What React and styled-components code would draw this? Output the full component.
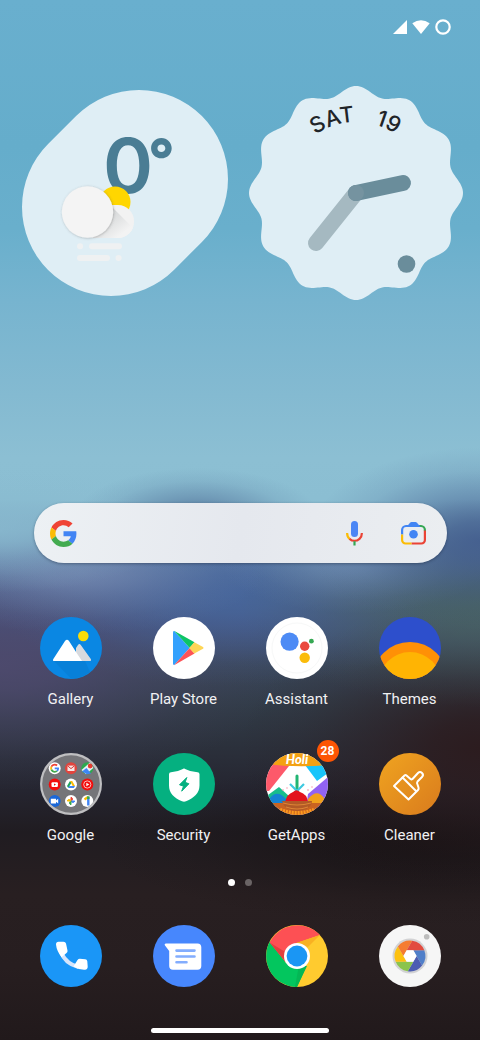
import React from 'react'
import styled, { createGlobalStyle } from 'styled-components'

const GlobalStyle = createGlobalStyle`
    * {
        box-sizing: border-box;
    }
    body {
        margin: 0;
        font-family: Roboto, sans-serif;
        background: #231b1d;
    }
    button {
        font: inherit;
        border: 0;
        padding: 0;
        background: none;
        cursor: pointer;
    }
    svg {
        display: block;
        overflow: visible;
    }
`

// soft spot of wallpaper colour that eases out towards its rim
const glow = (size, at, rgb, alpha) => `radial-gradient(
    ellipse ${size} at ${at},
    rgba(${rgb}, ${alpha}),
    rgba(${rgb}, ${alpha * 0.85}) 20%,
    rgba(${rgb}, ${alpha * 0.5}) 45%,
    rgba(${rgb}, ${alpha * 0.15}) 75%,
    rgba(${rgb}, 0)
)`

const Home = styled.main`
    min-height: 100vh;
    display: flex;
    flex-direction: column;
    padding-bottom: 7px;
    background:
        ${glow('26% 5%', '41% 50%', '74, 104, 146', 0.8)},
        ${glow('36% 9%', '100% 52%', '66, 92, 142', 0.9)},
        ${glow('36% 6%', '0% 51%', '136, 184, 206', 0.8)},
        ${glow('38% 6%', '17% 55%', '118, 138, 178', 0.75)},
        ${glow('28% 5%', '74% 54%', '112, 142, 180', 0.8)},
        ${glow('50% 10%', '100% 58%', '72, 98, 94', 0.95)},
        ${glow('50% 9%', '48% 57%', '70, 102, 156', 0.9)},
        ${glow('60% 12%', '0% 64%', '80, 74, 112', 0.85)},
        ${glow('50% 14%', '100% 72%', '44, 28, 31', 1)},
        ${glow('70% 8%', '90% 81%', '22, 17, 19', 0.8)},
        linear-gradient(
            #69afce 0%,
            #65adcb 14%,
            #69afcc 22%,
            #77b4cf 29%,
            #84bad1 38%,
            #8cbfd3 44%,
            #8bbed2 48%,
            #7fadc6 51%,
            #6283a9 54%,
            #4d618c 57%,
            #44527a 60%,
            #3a4659 64%,
            #313b47 68%,
            #2b303b 72%,
            #252530 76%,
            #201c21 80%,
            #281f21 86%,
            #271e20 93%,
            #21191b 100%
        );
`

const StatusBar = styled.header`
    height: 54px;
    display: flex;
    align-items: center;
    justify-content: flex-end;
    gap: 5px;
    padding-right: 29px;
`

const Widgets = styled.section`
    display: flex;
    align-items: center;
    justify-content: space-between;
    padding: 32px 17px 0 22px;
`

const SearchBar = styled.form`
    height: 60px;
    margin: auto 33px 0 34px;
    padding: 0 21px 0 16px;
    display: flex;
    align-items: center;
    border-radius: 30px;
    background: linear-gradient(100deg, #edf1f4, #e5e8ee 50%, #ebeef1);
    box-shadow: 0 1px 3px rgba(20, 30, 50, 0.4);
`

const SearchInput = styled.input`
    flex: 1;
    min-width: 0;
    height: 40px;
    margin: 0 16px;
    border: 0;
    outline: 0;
    background: transparent;
    font: 16px Roboto, sans-serif;
    color: #202124;
`

const SearchActions = styled.div`
    display: flex;
    align-items: center;
    gap: 38px;
`

const AppGrid = styled.nav`
    display: grid;
    grid-template-columns: repeat(4, 1fr);
    row-gap: 44px;
    padding: 0 14px;
    margin-top: ${props => props.$top}px;
`

const AppButton = styled.button`
    display: flex;
    flex-direction: column;
    align-items: center;
    gap: 10px;
    color: #f1f1f3;
    font-size: 15px;
    line-height: 20px;
`

const IconBox = styled.span`
    position: relative;
    width: 62px;
    height: 62px;
`

const Badge = styled.span`
    position: absolute;
    top: -13px;
    right: -11px;
    width: 22px;
    height: 22px;
    border-radius: 50%;
    background: #fd5504;
    color: #fff;
    font-size: 12px;
    font-weight: 700;
    line-height: 22px;
    text-align: center;
`

const Pager = styled.div`
    display: flex;
    justify-content: center;
    gap: 10px;
    margin-top: 34px;
`

const PageDot = styled.span`
    width: 7px;
    height: 7px;
    border-radius: 50%;
    background: ${props => (props.$active ? '#fff' : '#6a6465')};
`

const HomeBar = styled.div`
    width: 37%;
    height: 5px;
    margin: 41px auto 0;
    border-radius: 3px;
    background: #fff;
`

const polar = (r, deg) => {
    const a = (deg * Math.PI) / 180
    return [r * Math.cos(a), r * Math.sin(a)]
}

// twelve lobes around the clock face
const scallop = Array.from({ length: 360 }, (_, deg) => {
    const r = 102.5 + 4.5 * Math.cos((12 * deg * Math.PI) / 180)
    return polar(r, deg).map(n => (n + 107).toFixed(2)).join(' ')
}).join('L')

const WeatherWidget = () => (
    <svg width="206" height="206" viewBox="0 0 206 206" role="img" aria-label="Weather">
        <defs>
            <filter id="cloudShadow" x="-30%" y="-30%" width="160%" height="160%">
                <feDropShadow dx="0.5" dy="0.5" stdDeviation="1" floodColor="#555" floodOpacity="0.4" />
            </filter>
            <linearGradient id="cloud" x1="0" y1="0" x2="1" y2="1">
                <stop offset="0.3" stopColor="#d6d8d9" />
                <stop offset="0.75" stopColor="#f3f3f3" />
            </linearGradient>
            <clipPath id="cloudClip">
                <rect x="58" y="115" width="54" height="33" rx="16" />
            </clipPath>
        </defs>
        <path d="M117 89L89 117" stroke="#dfeef5" strokeWidth="178" strokeLinecap="round" />
        <g fontFamily="Inter, sans-serif" fill="#4a7d94">
            <text x="81" y="103" fontSize="76" fontWeight="600">0</text>
            <text x="126" y="90" fontSize="58" fontWeight="800">°</text>
        </g>
        <circle cx="93" cy="112" r="15.5" fill="#ffd600" />
        <rect x="58" y="115" width="54" height="33" rx="16" fill="#f2f2f2" />
        <path d="M91 118L113 140V150H70z" fill="url(#cloud)" clipPath="url(#cloudClip)" />
        <circle cx="65.500" cy="122" r="25.700" fill="#f4f4f4" filter="url(#cloudShadow)" />
        <path d="M58 156.300h.1M70 156.300h27M58 167.900h27M96.500 167.900h.1" stroke="#eff1f2" strokeWidth="6" strokeLinecap="round" />
    </svg>
)

const ClockWidget = () => (
    <svg width="214" height="214" viewBox="0 0 214 214" role="img" aria-label="Clock">
        <defs>
            <path id="dateArc" d="M36 107A71 71 0 0 1 178 107" />
        </defs>
        <path d={`M${scallop}Z`} fill="#dfeef5" />
        <g fontFamily="Inter, sans-serif" fontSize="22" fontWeight="500" fill="#1f2529">
            <text textAnchor="middle">
                <textPath href="#dateArc" startOffset="89">SAT</textPath>
            </text>
            <text textAnchor="middle">
                <textPath href="#dateArc" startOffset="142">19</textPath>
            </text>
        </g>
        <g strokeWidth="16" strokeLinecap="round">
            <path d="M107 107L67 157" stroke="#a5b9c1" />
            <path d="M107 107L154 97" stroke="#6a8d9b" />
        </g>
        <circle cx="107" cy="107" r="8" fill="#7593a0" />
        <circle cx="157.500" cy="178" r="8.800" fill="#6a8d9b" />
    </svg>
)

const GoogleLogo = ({ size, x, y }) => (
    <svg width={size} height={size} x={x} y={y} viewBox="0 0 48 48" aria-hidden="true">
        <path fill="#ef4335" d="M24 9.500c3.540 0 6.710 1.220 9.210 3.600l6.850-6.850C35.900 2.380 30.470 0 24 0 14.620 0 6.510 5.380 2.560 13.220l7.980 6.190C12.430 13.720 17.740 9.500 24 9.500z" />
        <path fill="#4285f4" d="M46.980 24.550c0-1.570-.15-3.090-.38-4.550H24v9.020h12.940c-.58 2.960-2.260 5.480-4.780 7.180l7.730 6c4.510-4.180 7.090-10.360 7.090-17.650z" />
        <path fill="#fbbc05" d="M10.530 28.590c-.48-1.450-.76-2.990-.76-4.590s.27-3.140.76-4.590l-7.980-6.190C.92 16.460 0 20.120 0 24c0 3.880.92 7.540 2.560 10.780l7.970-6.190z" />
        <path fill="#43ab50" d="M24 48c6.480 0 11.930-2.130 15.890-5.810l-7.730-6c-2.150 1.450-4.920 2.300-8.160 2.300-6.260 0-11.570-4.220-13.470-9.910l-7.980 6.190C6.510 42.620 14.620 48 24 48z" />
    </svg>
)

const MicIcon = () => (
    <svg width="17" height="25" viewBox="0 0 17 25" aria-hidden="true">
        <rect x="5" y="0" width="7" height="16" rx="3.500" fill="#4a86f5" />
        <g fill="none" strokeWidth="2.200">
            <path d="M1.100 12c0 2.600 1 4.700 2.600 6" stroke="#fbbc05" />
            <path d="M3.500 17.800c3 2.600 7 2.600 10 0 1.500-1.300 2.400-3.300 2.400-5.800" stroke="#ea4335" />
            <path d="M8.500 20.200V24.500" stroke="#34a853" />
        </g>
    </svg>
)

const LensIcon = () => (
    <svg width="25" height="23" viewBox="0 0 25 23" aria-hidden="true">
        <g fill="none" strokeWidth="2.200">
            <path d="M1.100 12.500V8A4 4 0 0 1 5 4h14" stroke="#4285f4" />
            <path d="M18.500 4h1.500a4 4 0 0 1 3.900 4v1" stroke="#34a853" />
            <path d="M23.900 8.500V18a3.500 3.500 0 0 1-3.500 3.500H10.500" stroke="#ea4335" />
            <path d="M1.100 12.500V18a3.500 3.500 0 0 0 3.500 3.500H10.500" stroke="#fbbc05" />
        </g>
        <path d="M5.500 5L9 .8Q9.700 0 10.500 0h4q.8 0 1.500.8L19.500 5z" fill="#4285f4" />
        <circle cx="12.500" cy="12.200" r="4.300" fill="#4285f4" />
    </svg>
)

const Icon = ({ bg, children }) => (
    <svg width="62" height="62" viewBox="0 0 62 62" aria-hidden="true">
        <circle cx="31" cy="31" r="31" fill={bg} />
        {children}
    </svg>
)

const GalleryIcon = () => (
    <Icon bg="#0a87e3">
        <path d="M14 44L31 61.500A31 31 0 0 0 50 55L45 44z" fill="#0880d8" />
        <circle cx="43.300" cy="19" r="5.300" fill="#fbdc07" />
        <path d="M36 44V31l2-3q1.400-2 2.800 0l10 14q1 2-1.300 2z" fill="#d8dade" />
        <path d="M14.500 44q-2.500 0-1-2.300L25 24q2-2.600 4 0l8 12.500L42 44z" fill="#fff" />
    </Icon>
)

const PlayStoreIcon = () => (
    <Icon bg="#fff">
        <path d="M20 15.500q0-2 1.300-1.500L36.700 31 21.300 48q-1.300 0-1.300-1.500z" fill="#33a1fd" />
        <path d="M21 13.700L41.500 25.200 36.700 31z" fill="#0dc466" />
        <path d="M21 48.200L41.500 36.500 36.700 31z" fill="#fd5357" />
        <path d="M41.300 25.200L50 30q1.300.9 0 1.800L41.300 36.500 36.200 31z" fill="#fed657" />
    </Icon>
)

const AssistantIcon = () => (
    <Icon bg="#fff">
        <circle cx="31" cy="31" r="25" fill="none" stroke="#f7f8f8" />
        <circle cx="23.600" cy="24.700" r="9.100" fill="#4d8bf5" />
        <circle cx="38.700" cy="29.300" r="4.700" fill="#ea4a3d" />
        <circle cx="38.700" cy="40.700" r="5.200" fill="#fbbc0b" />
        <circle cx="45.400" cy="24.200" r="2.400" fill="#36a853" />
    </Icon>
)

const ThemesIcon = () => (
    <Icon bg="#2d4fcc">
        <clipPath id="themesClip">
            <circle cx="31" cy="31" r="31" />
        </clipPath>
        <g clipPath="url(#themesClip)">
            <circle cx="31" cy="62.500" r="37.500" fill="#ff9006" />
            <circle cx="31" cy="66.500" r="31.500" fill="#ffb403" />
        </g>
    </Icon>
)

const FolderIcon = () => (
    <Icon bg="#bfbfc1">
        <clipPath id="folderClip">
            <circle cx="31" cy="31" r="28.800" />
        </clipPath>
        <circle cx="31" cy="31" r="28.800" fill="#757579" />
        <g clipPath="url(#folderClip)">
            <circle cx="14.700" cy="15.200" r="6" fill="#fff" />
            <GoogleLogo size={9} x={10.2} y={10.7} />
            <circle cx="31" cy="15.200" r="6" fill="#e2443d" />
            <rect x="27.500" y="12.600" width="7" height="5.400" fill="#f6e7e6" />
            <path d="M27.500 12.800L31 15.600 34.500 12.800" fill="none" stroke="#d63a33" />
            <circle cx="47.300" cy="15.200" r="6" fill="#2da94f" />
            <path d="M41.500 17L50 9.500 53.300 15 46 21.200z" fill="#e9f1f6" />
            <path d="M42 18.500L46.500 15 51 20.500 47 21.200z" fill="#3f86f5" />
            <circle cx="50.200" cy="13" r="2.400" fill="#e53b31" />
            <circle cx="14.700" cy="31.500" r="6" fill="#f20c0c" />
            <rect x="11.500" y="29.300" width="6.400" height="4.600" rx="1" fill="#fff" />
            <path d="M14 30.500V32.800L16 31.600z" fill="#f20c0c" />
            <circle cx="31" cy="31.500" r="6" fill="#fff" />
            <path d="M30 28L27 33 28.200 35 31.500 29.800z" fill="#21a35c" />
            <path d="M30 28H32.200L35 33H32.700z" fill="#fbbc05" />
            <path d="M29.300 33H35L33.900 35H28.200z" fill="#4285f4" />
            <circle cx="47.300" cy="31.500" r="6" fill="#f20c0c" />
            <circle cx="47.300" cy="31.500" r="3.600" fill="none" stroke="#fff" strokeWidth="0.700" />
            <path d="M46.300 29.700V33.300L49.300 31.500z" fill="#fff" />
            <circle cx="14.700" cy="48" r="6" fill="#1a67d8" />
            <path d="M10.800 45.800h5.200v1.600l2.200-1.600v4.600l-2.200-1.600v1.600h-5.200z" fill="#fff" />
            <circle cx="31" cy="48" r="6" fill="#fff" />
            <path d="M31 48V44.300A1.900 1.900 0 0 1 31 48z" fill="#ea4335" stroke="#ea4335" />
            <path d="M31 48H34.700A1.900 1.900 0 0 1 31 48z" fill="#4285f4" stroke="#4285f4" />
            <path d="M31 48V51.700A1.900 1.900 0 0 1 31 48z" fill="#34a853" stroke="#34a853" />
            <path d="M31 48H27.300A1.900 1.900 0 0 1 31 48z" fill="#fbbc05" stroke="#fbbc05" />
            <circle cx="47.300" cy="48" r="6" fill="#fff" />
            <path d="M48.300 44V52.500" stroke="#4285f4" strokeWidth="2.400" />
            <path d="M44.500 46.500L48 44" stroke="#fbbc05" strokeWidth="2.200" />
            <path d="M48.300 43.300V46" stroke="#34a853" strokeWidth="2.400" />
        </g>
    </Icon>
)

const SecurityIcon = () => (
    <Icon bg="#05b080">
        <path d="M29.300 16.300Q31 14.900 32.700 16.300 37.500 19 44.500 19.300q2 .1 2 2V32.500C46.500 40 41 45 33 48.300q-2 .9-4 0C21 45 16 40 16 32.500V21.300q0-1.900 2-2 6.500-.3 11.300-3z" fill="#fff" />
        <path d="M33.800 24.500L26.500 31.800l4 1.400-1.800 5 7.200-7.400-3.800-1.500z" fill="#05b080" stroke="#05b080" strokeLinejoin="round" />
    </Icon>
)

const GetAppsIcon = () => (
    <Icon bg="#fff">
        <clipPath id="getAppsClip">
            <circle cx="31" cy="31" r="31" />
        </clipPath>
        <g clipPath="url(#getAppsClip)">
            <path d="M0 8H27L3 38H0z" fill="#fd596a" />
            <path d="M36 8H62V20L51 28z" fill="#18c5fb" />
            <path d="M62 24V55H40L42 41z" fill="#9163f3" />
            <path d="M2 42L13 34 24 44V52H2z" fill="#18bd8c" />
            <path d="M31 23V40" stroke="#22b573" strokeWidth="3" strokeLinecap="round" />
            <path d="M24 31L31 38 38 31" fill="none" stroke="#3ec9e0" strokeWidth="2.200" />
            <path d="M0 49H62V62H0z" fill="#c96321" />
            <path d="M4 50V45Q11 36 20 46V50z" fill="#1583d3" />
            <path d="M42 50V46Q51 35 58 45V50z" fill="#f0a11c" />
            <path d="M19 49Q21 41 27 39q3.500-3.500 7 0 7 2 8 10z" fill="#e3121d" />
            <path d="M16 48H46Q45 57 31 58 18 57 16 48z" fill="#b25a26" />
            <path d="M17 50Q31 54 45 50M20 54Q31 58 42 54" fill="none" stroke="#dd8335" strokeWidth="1.200" />
            <path d="M14 57Q31 63 48 57" fill="none" stroke="#fb9a1e" strokeWidth="4" strokeDasharray="2 1" />
            <g fill="#f58aa5">
                <circle cx="17" cy="37" r="0.800" />
                <circle cx="42" cy="37" r="0.800" />
                <circle cx="46" cy="34" r="0.700" />
                <circle cx="21" cy="35" r="0.700" />
            </g>
            <path d="M0 0H62V12Q31 15 0 11z" fill="#f3a112" />
        </g>
        <text x="31" y="11" textAnchor="middle" fontFamily="Lato, sans-serif" fontSize="13" fontWeight="900" fontStyle="italic" fill="#fff">Holi</text>
    </Icon>
)

const CleanerIcon = () => (
    <Icon bg="url(#cleanerFill)">
        <defs>
            <linearGradient id="cleanerFill" x1="0" y1="0" x2="1" y2="1">
                <stop offset="0" stopColor="#f0a420" />
                <stop offset="1" stopColor="#d97b1d" />
            </linearGradient>
        </defs>
        <g fill="none" stroke="#fff" strokeWidth="2" strokeLinejoin="round" strokeLinecap="round">
            <path d="M15 33L25.500 22.500Q26.500 21.600 27.500 22.500L31.500 26Q32.500 26.800 33.500 26L39 20Q41 18 43 20 45 22 43 24L38.500 28.500Q37.500 30 38.500 31.500L39.500 34.500Q40 36 39 37L29.500 46.500z" />
            <path d="M23.500 24.500L37 38" />
        </g>
    </Icon>
)

const PhoneIcon = () => (
    <Icon bg="#1a96f7">
        <path d="M19 27Q23 40 38 44L38.500 40Q28 37 23.500 28z" fill="#d6e5fb" />
        <path d="M18.500 16.700H23.500Q25.500 16.700 26 18.500L27.500 25.500Q27.800 27 26.500 28L21.500 32.200Q16.500 25.500 16 19.500 16 16.700 18.500 16.700z" fill="#fff" />
        <path d="M33.500 41.500L37.500 35Q38.400 33.800 39.800 33.800L45.200 34.300Q47 34.500 47.300 36.200L47.700 41.500Q47.800 44.600 45 44.700 39 45 33.500 41.500z" fill="#fff" />
    </Icon>
)

const MessagesIcon = () => (
    <Icon bg="#4787fd">
        <path d="M13 18.500H44.500Q48.300 18.500 48.300 22.300V41Q48.300 44.700 44.500 44.700H20Q16.200 44.700 16.200 41V26L12 20.500Q11 18.500 13 18.500z" fill="#fff" />
        <path d="M23.500 25.600h18M23.500 31.500h18M23.500 37.200h10" stroke="#83adfe" strokeWidth="2.600" strokeLinecap="round" />
    </Icon>
)

const ChromeIcon = () => (
    <Icon bg="#ffcb2f">
        <path d="M31 62A31 31 0 0 1 4 16L20 38 40 42z" fill="#03c65e" />
        <path d="M31 62L41 41 33 40 29 62z" fill="#04b755" />
        <path d="M3.700 17.500A31 31 0 0 1 54 10L31 18 19.500 37z" fill="#fd5054" />
        <path d="M3.700 17.500L19.500 37 21 28z" fill="#e2403f" />
        <path d="M54 10L30 18 42 22z" fill="#f9b122" />
        <circle cx="31" cy="31" r="13" fill="#fff" />
        <circle cx="31" cy="31" r="10.400" fill="#1a96f4" />
    </Icon>
)

const bladeColors = ['#507fc9', '#4c5db2', '#8bc44c', '#fdc110', '#f57c31', '#e24c3f']

// each blade edge runs on from one side of the inner hexagon to the rim
const blades = bladeColors.map((color, i) => {
    const inner = 6.6
    const rim = 15.4
    const reach = Math.sqrt(rim * rim - inner * inner * 0.75) - inner / 2
    const vertex = a => polar(inner, a)
    const tip = a => {
        const [x, y] = vertex(a)
        const [dx, dy] = polar(reach, a + 60)
        return [x + dx, y + dy]
    }
    const a = i * 60 - 60
    return {
        color,
        d: `M${vertex(a)}L${tip(a)}A${rim} ${rim} 0 0 1 ${tip(a + 60)}L${vertex(a + 60)}Z`
    }
})

const CameraIcon = () => (
    <Icon bg="#f6f6f6">
        <circle cx="31" cy="31" r="17.500" fill="#d2d2d4" />
        <g transform="translate(31 31)">
            {blades.map(({ color, d }) => <path key={color} d={d} fill={color} />)}
            <path d="M6.600 0L3.300 5.700H-3.300L-6.600 0-3.300-5.700H3.300z" fill="#fff" />
        </g>
        <circle cx="47.700" cy="11.700" r="2.800" fill="#bdbdbd" />
    </Icon>
)

const apps = [
    { label: 'Gallery', icon: GalleryIcon },
    { label: 'Play Store', icon: PlayStoreIcon },
    { label: 'Assistant', icon: AssistantIcon },
    { label: 'Themes', icon: ThemesIcon },
    { label: 'Google', icon: FolderIcon },
    { label: 'Security', icon: SecurityIcon },
    { label: 'GetApps', icon: GetAppsIcon, badge: 28 },
    { label: 'Cleaner', icon: CleanerIcon }
]

const dock = [
    { label: 'Phone', icon: PhoneIcon },
    { label: 'Messages', icon: MessagesIcon },
    { label: 'Chrome', icon: ChromeIcon },
    { label: 'Camera', icon: CameraIcon }
]

const App = () => {
    return <Home>
        <GlobalStyle />

        <StatusBar>
            <svg width="14" height="14" viewBox="0 0 14 14" aria-hidden="true">
                <path d="M0 14L14 0V14z" fill="#fff" />
            </svg>
            <svg width="18" height="14" viewBox="0 0 18 14" aria-hidden="true">
                <path d="M9 14L.3 3.300Q9-3 17.700 3.300z" fill="#fff" />
            </svg>
            <svg width="16" height="16" viewBox="0 0 16 16" aria-hidden="true">
                <circle cx="8" cy="8" r="6.700" fill="none" stroke="#fff" strokeWidth="2.200" />
            </svg>
        </StatusBar>

        <Widgets>
            <WeatherWidget />
            <ClockWidget />
        </Widgets>

        <SearchBar role="search" onSubmit={e => e.preventDefault()}>
            <GoogleLogo size={27} />
            <SearchInput type="text" aria-label="Search" />
            <SearchActions>
                <button type="button" aria-label="Voice search"><MicIcon /></button>
                <button type="button" aria-label="Lens"><LensIcon /></button>
            </SearchActions>
        </SearchBar>

        <AppGrid $top={54} aria-label="Apps">
            {apps.map(({ label, icon: AppIcon, badge }) => (
                <AppButton key={label} type="button">
                    <IconBox>
                        <AppIcon />
                        {badge && <Badge>{badge}</Badge>}
                    </IconBox>
                    {label}
                </AppButton>
            ))}
        </AppGrid>

        <Pager>
            <PageDot $active />
            <PageDot />
        </Pager>

        <AppGrid $top={39} aria-label="Dock">
            {dock.map(({ label, icon: AppIcon }) => (
                <AppButton key={label} type="button" aria-label={label}>
                    <IconBox><AppIcon /></IconBox>
                </AppButton>
            ))}
        </AppGrid>

        <HomeBar />
    </Home>
}

export default App
